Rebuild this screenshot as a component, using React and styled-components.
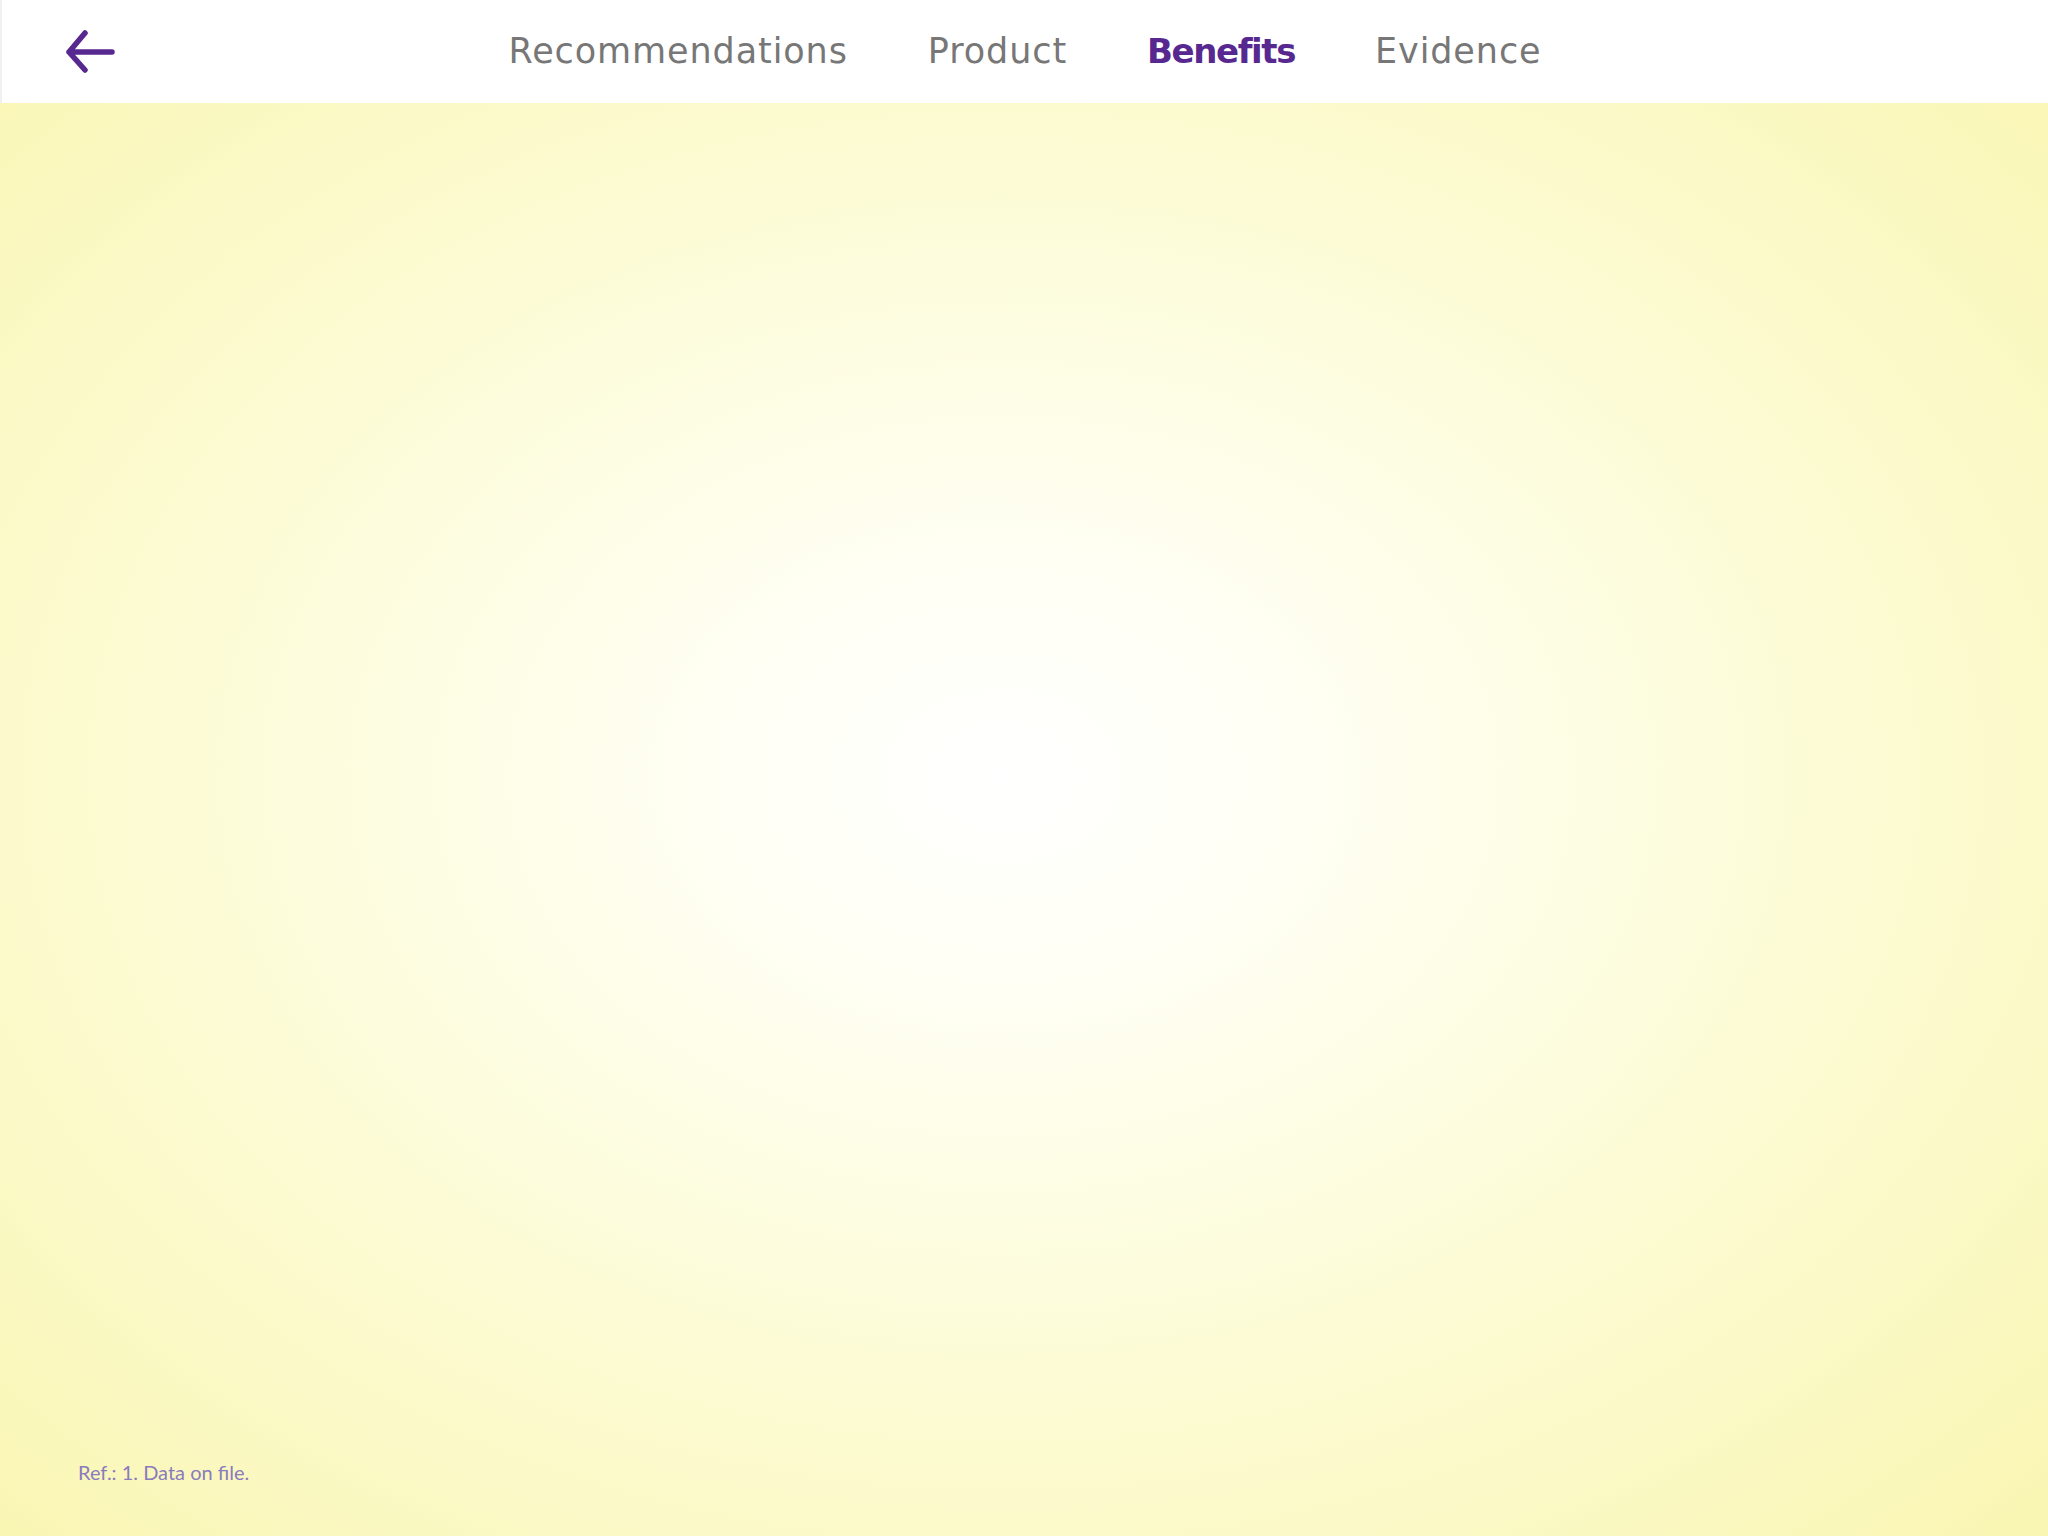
import React from "react";
import styled, { createGlobalStyle } from "styled-components";

const GlobalStyle = createGlobalStyle`
  html, body {
    margin: 0;
    padding: 0;
  }
  body {
    font-family: "DejaVu Sans", sans-serif;
  }
`;

const Page = styled.div`
  display: flex;
  flex-direction: column;
  width: 100%;
  height: 100vh;
  overflow: hidden;
`;

const Header = styled.header`
  flex: 0 0 103px;
  display: grid;
  grid-template-columns: 1fr auto 1fr;
  align-items: center;
  background-color: #ffffff;
  border-left: 2px solid #f1f1f1;
`;

const BackButton = styled.button`
  justify-self: start;
  width: 50px;
  height: 44px;
  margin-left: 64px;
  padding: 0;
  border: none;
  background: none;
  cursor: pointer;
  display: flex;
`;

const Nav = styled.nav`
  display: flex;
  align-items: center;
  gap: 80px;
  margin-bottom: 2px;
`;

const NavItem = styled.a`
  font-family: "DejaVu Sans", sans-serif;
  font-size: ${(props) => (props.current ? "34px" : "35px")};
  font-weight: ${(props) => (props.current ? 700 : 400)};
  letter-spacing: ${(props) => (props.current ? "-1.4px" : "0.9px")};
  color: ${(props) => (props.current ? "#57288f" : "#777777")};
  text-decoration: none;
  white-space: nowrap;
  cursor: pointer;
`;

const Main = styled.main`
  flex: 1;
  display: flex;
  flex-direction: column;
  justify-content: flex-end;
  padding: 0 0 52px 78px;
  background: radial-gradient(
    ellipse at 49% 47%,
    #ffffff 0%,
    #fffff4 20%,
    #fcfbd2 60%,
    #f9f6b2 100%
  );
`;

const Note = styled.p`
  margin: 0;
  font-family: "Lato", sans-serif;
  font-size: 20px;
  color: #8a7bbe;
`;

const ArrowLeft = () => (
  <svg width="50" height="44" viewBox="0 0 50 44" fill="none">
    <path
      d="M19 3 L3 22 L19 40 M3 22 H46"
      stroke="#57288f"
      strokeWidth="5.5"
      strokeLinecap="round"
      strokeLinejoin="round"
    />
  </svg>
);

const links = ["Recommendations", "Product", "Benefits", "Evidence"];

export default function App() {
  return (
    <>
      <GlobalStyle />
      <Page>
        <Header>
          <BackButton aria-label="Back">
            <ArrowLeft />
          </BackButton>
          <Nav>
            {links.map((label) => (
              <NavItem key={label} current={label === "Benefits"}>
                {label}
              </NavItem>
            ))}
          </Nav>
          <div />
        </Header>
        <Main>
          <Note>Ref.: 1. Data on file.</Note>
        </Main>
      </Page>
    </>
  );
}
